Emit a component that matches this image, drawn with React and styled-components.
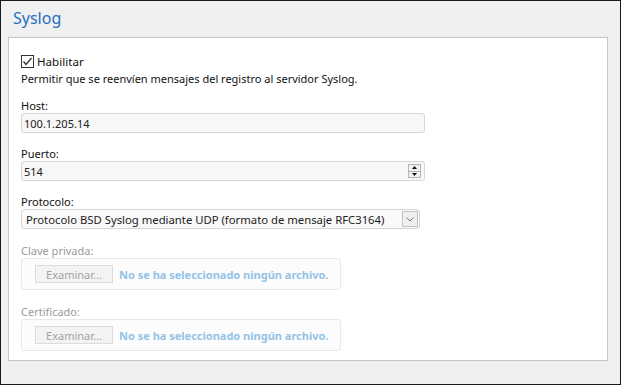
import React from "react";
import styled, { createGlobalStyle } from "styled-components";

const GlobalStyle = createGlobalStyle`
  html, body {
    margin: 0;
    padding: 0;
    background: #f0f0f0;
  }
  body {
    font-family: "Noto Sans", "Open Sans", Arial, sans-serif;
    font-size: 11px;
    color: #1a1a1a;
    white-space: nowrap;
  }
`;

const Window = styled.div`
  box-sizing: border-box;
  width: 621px;
  height: 385px;
  border: 1px solid #1a1a1a;
  background: #f0f0f0;
  display: flex;
  flex-direction: column;
  padding: 0 12px 0 7px;
`;

const Title = styled.h1`
  margin: 0;
  height: 36px;
  display: flex;
  align-items: center;
  padding: 0 0 3px 5px;
  box-sizing: border-box;
  font-size: 16px;
  font-weight: 400;
  color: #1f6fc2;
`;

const Panel = styled.section`
  box-sizing: border-box;
  height: 324px;
  background: #ffffff;
  border: 1px solid #c6c6c6;
  padding: 16px 12px 0 12px;
  display: flex;
  flex-direction: column;
`;

const CheckRow = styled.label`
  display: flex;
  align-items: center;
  gap: 3px;
  line-height: 15px;
  font-size: 11.6px;
  color: #111;
`;

const CheckBox = styled.span`
  box-sizing: border-box;
  width: 13px;
  height: 13px;
  border: 1px solid #333;
  background: #fff;
  display: flex;
  align-items: center;
  justify-content: center;
`;

const Description = styled.p`
  margin: 2px 0 0 0;
  line-height: 15px;
  color: #111;
`;

const Field = styled.div`
  margin-top: ${(p) => p.$gap}px;
  display: flex;
  flex-direction: column;
  align-items: flex-start;
`;

const Label = styled.span`
  line-height: 15px;
  color: ${(p) => (p.$disabled ? "#9a9a9a" : "#111")};
`;

const TextBox = styled.div`
  box-sizing: border-box;
  width: 404px;
  height: 20px;
  border: 1px solid #d6d6d6;
  border-radius: 3px;
  background: #f7f7f7;
  display: flex;
  align-items: center;
  justify-content: space-between;
  padding: 0 2px 0 2px;
  color: #222;
`;

const Spinner = styled.div`
  box-sizing: border-box;
  width: 13px;
  height: 14px;
  border: 1px solid #b4b4b4;
  background: #f0f0f0;
  display: flex;
  flex-direction: column;
  margin-right: 1px;
`;

const SpinHalf = styled.div`
  flex: 1;
  display: flex;
  align-items: center;
  justify-content: center;
  border-top: ${(p) => (p.$bottom ? "1px solid #b4b4b4" : "none")};
`;

const Select = styled.div`
  box-sizing: border-box;
  width: 399px;
  height: 20px;
  border: 1px solid #d6d6d6;
  border-radius: 3px;
  background: #f9f9f9;
  display: flex;
  align-items: center;
  justify-content: space-between;
  padding: 0 1px 0 4px;
  font-size: 11.3px;
  color: #222;
`;

const DropButton = styled.div`
  box-sizing: border-box;
  width: 16px;
  height: 16px;
  border: 1px solid #c2c2c2;
  background: #efefef;
  display: flex;
  align-items: center;
  justify-content: center;
`;

const FileBox = styled.div`
  box-sizing: border-box;
  width: 320px;
  height: 32px;
  border: 1px solid #e9e9e9;
  border-radius: 3px;
  background: #fcfcfc;
  display: flex;
  align-items: center;
  gap: 6px;
  padding: 0 0 0 13px;
`;

const BrowseButton = styled.div`
  box-sizing: border-box;
  width: 78px;
  height: 18px;
  border: 1px solid #dcdcdc;
  background: #f3f3f3;
  color: #a3a3a3;
  display: flex;
  align-items: center;
  justify-content: center;
`;

const NoFile = styled.span`
  font-weight: 700;
  color: #93c3e6;
`;

const Arrow = ({ up }) => (
  <svg width="5" height="3" viewBox="0 0 5 3">
    <polygon points={up ? "2.5,0 5,3 0,3" : "0,0 5,0 2.5,3"} fill="#111" />
  </svg>
);

const FilePicker = ({ label, gap }) => (
  <Field $gap={gap}>
    <Label $disabled>{label}</Label>
    <FileBox>
      <BrowseButton>Examinar...</BrowseButton>
      <NoFile>No se ha seleccionado ningún archivo.</NoFile>
    </FileBox>
  </Field>
);

export default function App() {
  return (
    <>
      <GlobalStyle />
      <Window>
        <Title>Syslog</Title>
        <Panel>
          <CheckRow>
            <CheckBox>
              <svg width="11" height="11" viewBox="0 0 11 11">
                <polyline points="1.5,5.5 4,8.5 9.5,2" fill="none" stroke="#333" strokeWidth="1.3" />
              </svg>
            </CheckBox>
            Habilitar
          </CheckRow>
          <Description>Permitir que se reenvíen mensajes del registro al servidor Syslog.</Description>

          <Field $gap={12}>
            <Label>Host:</Label>
            <TextBox>100.1.205.14</TextBox>
          </Field>

          <Field $gap={13}>
            <Label>Puerto:</Label>
            <TextBox>
              514
              <Spinner>
                <SpinHalf><Arrow up /></SpinHalf>
                <SpinHalf $bottom><Arrow /></SpinHalf>
              </Spinner>
            </TextBox>
          </Field>

          <Field $gap={13}>
            <Label>Protocolo:</Label>
            <Select>
              Protocolo BSD Syslog mediante UDP (formato de mensaje RFC3164)
              <DropButton>
                <svg width="8" height="5" viewBox="0 0 8 5">
                  <polyline points="0.5,0.5 4,4 7.5,0.5" fill="none" stroke="#777" strokeWidth="1" />
                </svg>
              </DropButton>
            </Select>
          </Field>

          <FilePicker label="Clave privada:" gap={14} />
          <FilePicker label="Certificado:" gap={14} />
        </Panel>
      </Window>
    </>
  );
}
